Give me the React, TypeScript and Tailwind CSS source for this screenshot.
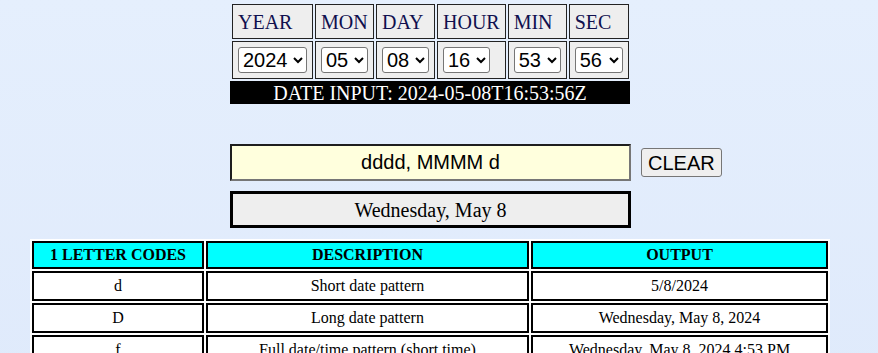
import { useState } from "react";

const SERIF = "font-['Liberation_Serif','Times_New_Roman',serif]";
const SANS = "font-['Liberation_Sans',Arial,sans-serif]";

const pad = (n: number) => String(n).padStart(2, "0");
const range = (from: number, to: number) =>
  Array.from({ length: to - from + 1 }, (_, i) => from + i);

// each column of the picker: label, cell width, select width, options
const PARTS = [
  { key: "year", label: "YEAR", cell: "w-[81px]", select: "w-[69px]", opts: range(2000, 2040), four: true },
  { key: "mon", label: "MON", cell: "w-[59px]", select: "w-[47px]", opts: range(1, 12) },
  { key: "day", label: "DAY", cell: "w-[59px]", select: "w-[47px]", opts: range(1, 31) },
  { key: "hour", label: "HOUR", cell: "w-[68px]", select: "w-[47px]", opts: range(0, 23) },
  { key: "min", label: "MIN", cell: "w-[59px]", select: "w-[47px]", opts: range(0, 59) },
  { key: "sec", label: "SEC", cell: "w-[60px]", select: "w-[48px]", opts: range(0, 59) },
] as const;

const CODES = [
  ["d", "Short date pattern", "5/8/2024"],
  ["D", "Long date pattern", "Wednesday, May 8, 2024"],
  ["f", "Full date/time pattern (short time)", "Wednesday, May 8, 2024 4:53 PM"],
  ["F", "Full date/time pattern (long time)", "Wednesday, May 8, 2024 4:53:56 PM"],
  ["g", "General date/time pattern (short time)", "5/8/2024 4:53 PM"],
  ["G", "General date/time pattern (long time)", "5/8/2024 4:53:56 PM"],
];

export default function App() {
  const [date, setDate] = useState<Record<string, number>>({
    year: 2024,
    mon: 5,
    day: 8,
    hour: 16,
    min: 53,
    sec: 56,
  });
  const [pattern, setPattern] = useState("dddd, MMMM d");

  const iso = `${date.year}-${pad(date.mon)}-${pad(date.day)}T${pad(date.hour)}:${pad(date.min)}:${pad(date.sec)}Z`;

  return (
    <div className={`min-h-screen bg-gradient-to-b from-[#e5effd] to-[#dee9fb] ${SERIF} text-black`}>
      <div className="flex w-[860px] flex-col items-center pt-[2px]">
        <div className="flex w-[400px] flex-col">
          {/* ── picker ── */}
          <table className="w-[400px] border-separate border-spacing-[2px]">
            <tbody>
              <tr>
                {PARTS.map((p) => (
                  <td
                    key={p.key}
                    className={`${p.cell} h-[35px] border border-[#222] bg-[#eeeeee] px-[5px] text-left text-[20px] text-[#10104e]`}
                  >
                    {p.label}
                  </td>
                ))}
              </tr>
              <tr>
                {PARTS.map((p) => (
                  <td key={p.key} className="h-[38px] border border-[#222] bg-[#eeeeee] px-[5px] text-left">
                    <select
                      value={date[p.key]}
                      onChange={(e) => setDate({ ...date, [p.key]: Number(e.target.value) })}
                      className={`${p.select} block h-[26px] rounded-[3px] border border-[#767676] bg-white ${SANS} text-[20px] text-black`}
                    >
                      {p.opts.map((o) => (
                        <option key={o} value={o}>
                          {"four" in p ? o : pad(o)}
                        </option>
                      ))}
                    </select>
                  </td>
                ))}
              </tr>
            </tbody>
          </table>
          <div className="flex h-[23px] items-center justify-center bg-black text-[20px] leading-none text-white">
            DATE INPUT: {iso}
          </div>

          {/* ── pattern ── */}
          <div className="mt-[40px] flex w-[400px] items-center gap-[10px]">
            <input
              value={pattern}
              onChange={(e) => setPattern(e.target.value)}
              className={`h-[37px] w-[401px] shrink-0 border-2 border-t-[#1e1e1e] border-r-[#767676] border-b-[#767676] border-l-[#1e1e1e] bg-[#ffffdd] text-center ${SANS} text-[20px] text-black`}
            />
            <button
              onClick={() => setPattern("")}
              className={`h-[29px] shrink-0 rounded-[3px] border border-[#767676] bg-[#efefef] px-[6px] ${SANS} text-[20px] leading-none text-black`}
            >
              CLEAR
            </button>
          </div>
          <div className="mt-[10px] flex h-[37px] w-[401px] items-center justify-center border-[3px] border-black bg-[#eeeeee] text-[20px]">
            Wednesday, May 8
          </div>
        </div>

        {/* ── codes table ── */}
        <table className="mt-[11px] w-[800px] border-separate border-spacing-[2px] bg-white text-[16px]">
          <thead>
            <tr>
              <th className="h-[28px] w-[172px] border-2 border-black bg-[#00ffff] font-bold">1 LETTER CODES</th>
              <th className="h-[28px] w-[323px] border-2 border-black bg-[#00ffff] font-bold">DESCRIPTION</th>
              <th className="h-[28px] border-2 border-black bg-[#00ffff] font-bold">OUTPUT</th>
            </tr>
          </thead>
          <tbody>
            {CODES.map(([code, desc, out]) => (
              <tr key={code}>
                <td className="h-[30px] border-2 border-black text-center">{code}</td>
                <td className="h-[30px] border-2 border-black text-center">{desc}</td>
                <td className="h-[30px] border-2 border-black text-center">{out}</td>
              </tr>
            ))}
          </tbody>
        </table>
      </div>
    </div>
  );
}
